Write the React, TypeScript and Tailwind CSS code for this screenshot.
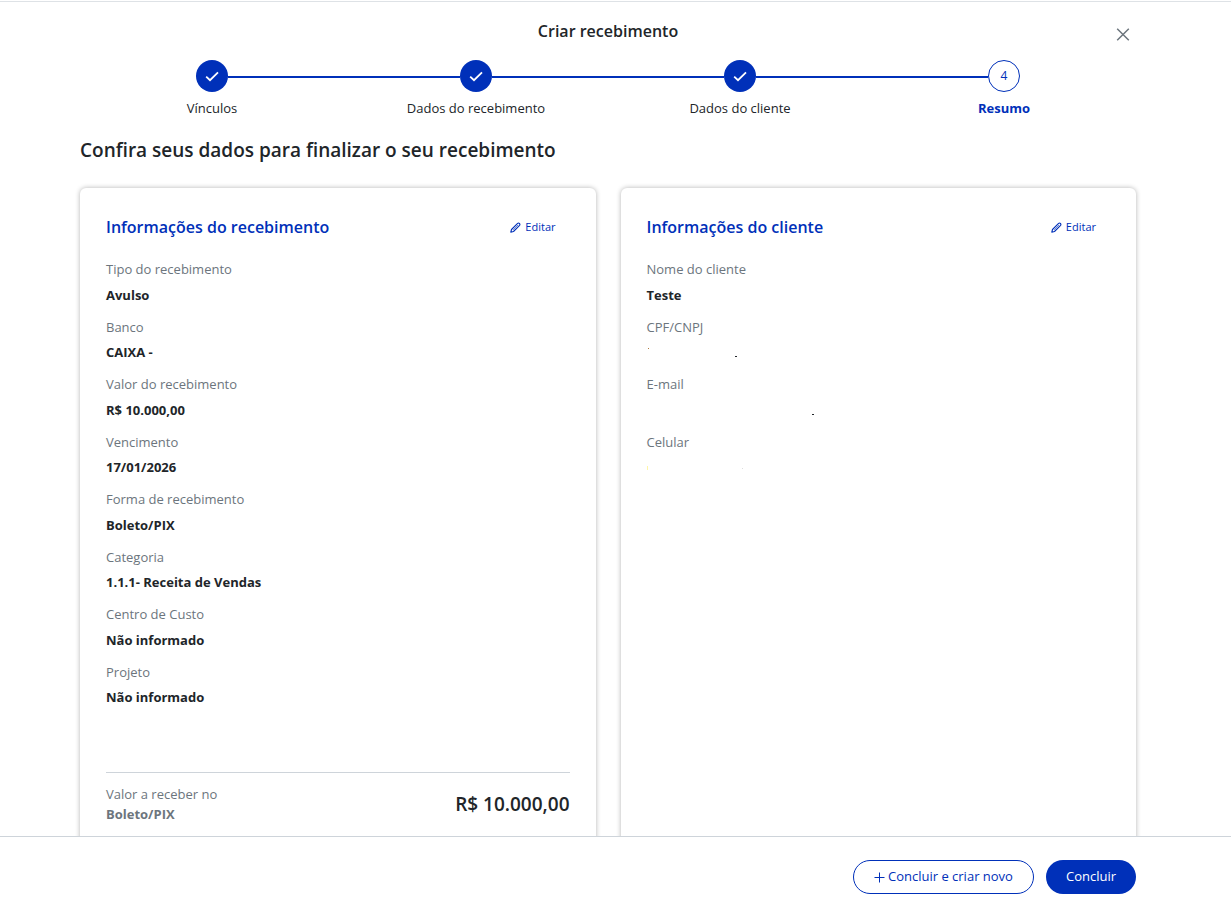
import type { ReactNode } from "react";

const steps = ["Vínculos", "Dados do recebimento", "Dados do cliente", "Resumo"];
const current = 3;

const receipt: [string, string][] = [
  ["Tipo do recebimento", "Avulso"],
  ["Banco", "CAIXA -"],
  ["Valor do recebimento", "R$ 10.000,00"],
  ["Vencimento", "17/01/2026"],
  ["Forma de recebimento", "Boleto/PIX"],
  ["Categoria", "1.1.1- Receita de Vendas"],
  ["Centro de Custo", "Não informado"],
  ["Projeto", "Não informado"],
];

const customer: [string, ReactNode][] = [
  ["Nome do cliente", "Teste"],
  [
    "CPF/CNPJ",
    <svg key="cpf" width="180" height="20" aria-hidden="true">
      <rect x="1" y="6" width="1" height="1" fill="#b07a3c" />
      <rect x="88" y="14" width="2" height="1" fill="#212529" />
    </svg>,
  ],
  [
    "E-mail",
    <svg key="mail" width="180" height="20" aria-hidden="true">
      <rect x="165" y="14" width="2" height="1" fill="#212529" />
    </svg>,
  ],
  [
    "Celular",
    <svg key="phone" width="180" height="20" aria-hidden="true">
      <rect x="0" y="9" width="1" height="4" fill="#fff6a8" />
      <rect x="95" y="11" width="1" height="1" fill="#dddddd" />
    </svg>,
  ],
];

function CheckIcon() {
  return (
    <svg width="14" height="12" viewBox="0 0 14 12" fill="none" aria-hidden="true">
      <path d="M1.2 6.6 5 10.2 13 2.4" stroke="white" strokeWidth="1.8" />
    </svg>
  );
}

function PencilIcon() {
  return (
    <svg width="11" height="11" viewBox="0 0 11 11" fill="none" stroke="currentColor" aria-hidden="true">
      <path d="M.8 10.2 1.5 7.5 7.6 1.4Q8.5.6 9.4 1.5T9.6 3.4L3.5 9.5Z" strokeWidth="1.1" strokeLinejoin="round" />
      <path d="M3.2 7.8 8 3" strokeWidth=".6" />
    </svg>
  );
}

function Card({ title, rows, children }: { title: string; rows: [string, ReactNode][]; children?: ReactNode }) {
  return (
    <section className="rounded-md bg-white px-[26px] pt-[27px] pb-6 shadow-[0_0_5px_rgba(0,0,0,0.3)]">
      <div className="flex items-center justify-between pr-3.5">
        <h3 className="text-base leading-6 font-semibold text-[#0030b9]">{title}</h3>
        <button type="button" className="flex items-center gap-1 text-[11px] leading-4 text-[#0030b9]">
          <PencilIcon />
          Editar
        </button>
      </div>
      <dl className="mt-[21px] flex flex-col gap-[13px]">
        {rows.map(([label, value]) => (
          <div key={label} className="flex flex-col gap-[5px]">
            <dt className="leading-normal text-[#6c757d]">{label}</dt>
            <dd className="h-5 leading-5 font-bold">{value}</dd>
          </div>
        ))}
      </dl>
      {children}
    </section>
  );
}

export default function App() {
  return (
    <div className="flex h-screen flex-col bg-white pt-px font-['Open_Sans',sans-serif] text-[13px] text-[#212529]">
      <main className="min-h-0 flex-1 overflow-y-auto border-t border-[#dee2e6] pr-[95px] pl-20 [scrollbar-width:none]">
        <header className="relative mt-[17px] text-center">
          <h1 className="text-base leading-6 font-semibold">Criar recebimento</h1>
          <button type="button" aria-label="Fechar" className="absolute top-2 right-1.5 text-[#6c757d]">
            <svg width="14" height="14" viewBox="0 0 14 14" fill="none" stroke="currentColor" strokeWidth="1.5" aria-hidden="true">
              <path d="M1.2 1.7 12.8 13.3M12.8 1.7 1.2 13.3" />
            </svg>
          </button>
        </header>

        <ol className="mt-[17px] grid grid-cols-4">
          {steps.map((step, i) => (
            <li key={step} className="flex flex-col items-center">
              <div className="flex w-full items-center">
                <span className={i > 0 ? "mt-0.5 h-0.5 flex-1 bg-[#0030b9]" : "flex-1"} />
                <span
                  className={
                    i < current
                      ? "flex size-8 items-center justify-center rounded-full bg-[#0030b9]"
                      : "flex size-8 items-center justify-center rounded-full border border-[#0030b9] text-xs text-[#0030b9]"
                  }
                >
                  {i < current ? <CheckIcon /> : i + 1}
                </span>
                <span className={i < current ? "mt-0.5 h-0.5 flex-1 bg-[#0030b9]" : "flex-1"} />
              </div>
              <span className={i === current ? "mt-1.5 leading-5 font-bold text-[#0030b9]" : "mt-1.5 leading-5"}>{step}</span>
            </li>
          ))}
        </ol>

        <h2 className="mt-[18px] text-[19px] leading-7 font-semibold">Confira seus dados para finalizar o seu recebimento</h2>

        <div className="mt-6 mb-6 grid grid-cols-2 gap-[25px]">
          <Card title="Informações do recebimento" rows={receipt}>
            <div className="mt-[65px] flex items-center justify-between border-t border-[#ced4da] pt-[11px]">
              <p className="leading-5 text-[#6c757d]">
                Valor a receber no
                <br />
                <strong>Boleto/PIX</strong>
              </p>
              <p className="text-[19px] leading-7 font-semibold">R$ 10.000,00</p>
            </div>
          </Card>
          <Card title="Informações do cliente" rows={customer} />
        </div>
      </main>

      <footer className="flex justify-end gap-3 border-t border-[#ced4da] pt-[23px] pr-[95px] pb-3.5">
        <button type="button" className="flex h-[34px] items-center gap-[3px] rounded-full border border-[#0030b9] px-5 text-[#0030b9]">
          <svg width="11" height="11" viewBox="0 0 11 11" stroke="currentColor" aria-hidden="true">
            <path d="M5.5 .5v10M.5 5.5h10" />
          </svg>
          Concluir e criar novo
        </button>
        <button type="button" className="h-[34px] rounded-full bg-[#0030b9] px-5 text-white">
          Concluir
        </button>
      </footer>
    </div>
  );
}
